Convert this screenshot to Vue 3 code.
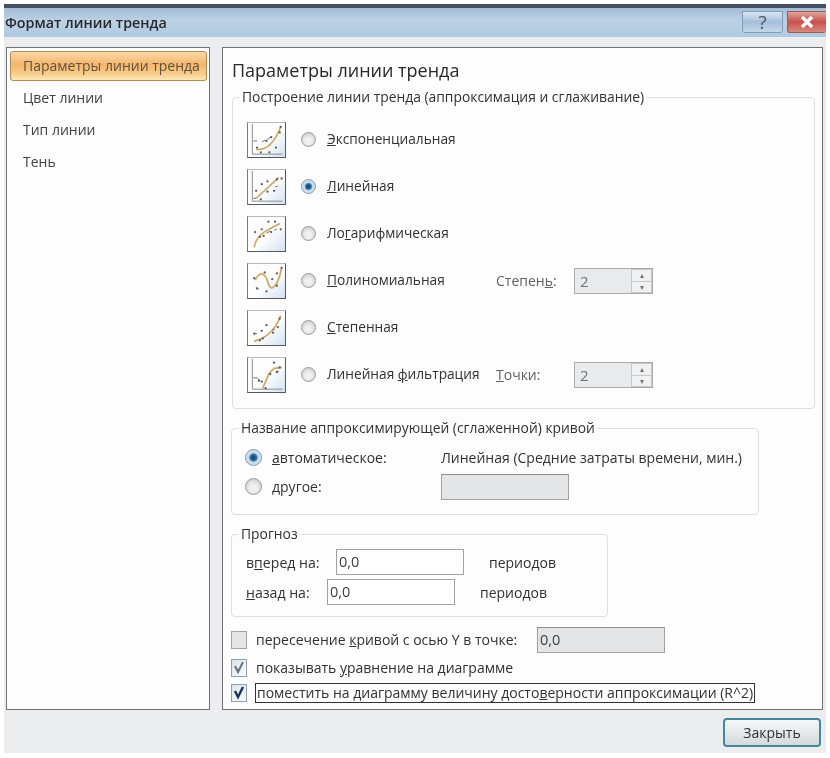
<script setup>
const nav = ['Параметры линии тренда', 'Цвет линии', 'Тип линии', 'Тень']

const trends = [
  { before: '', key: 'Э', after: 'кспоненциальная', line: 'M8 28C17 29 27 23 34 4', ticks: 'M5 19h4M14 20l4-2M20 17l4-2', dots: [[9,26],[13,31],[19,19],[24,15],[22,31],[29,26],[33,10],[34,4]], axis: true },
  { before: '', key: 'Л', after: 'инейная', checked: true, line: 'M8 30L32 8', ticks: 'M28 18l3-1M5 30h3', dots: [[8,22],[13,31],[14,15],[20,12],[20,23],[27,22],[30,10],[35,9]], axis: true },
  { before: 'Ло', key: 'г', after: 'арифмическая', line: 'M6 32C8 20 15 16 33 7', ticks: 'M19 17l4-2M27 14l3-1', dots: [[7,16],[14,13],[16,20],[21,5],[24,16],[28,5],[34,13],[12,21]] },
  { before: '', key: 'П', after: 'олиномиальная', line: 'M7 17C12 7 18 9 21 21C24 29 27 24 30 20C33 14 34 10 35 4', ticks: 'M8 24l3 3', dots: [[6,15],[9,26],[17,9],[19,29],[30,23],[30,10],[35,4],[25,16]], extra: true, spinBefore: 'Степен', spinKey: 'ь', spinAfter: ':' },
  { before: '', key: 'С', after: 'тепенная', line: 'M6 32C18 29 28 21 34 5', ticks: 'M6 24h3M25 20l3-1', dots: [[6,24],[14,21],[15,29],[19,15],[26,23],[31,17],[33,8],[12,31]] },
  { before: 'Линейная ', key: 'ф', after: 'ильтрация', line: 'M15 32L22 16L27 11L35 10', ticks: 'M5 21h4l3 3M29 14h3', dots: [[14,25],[18,32],[23,17],[27,5],[33,10],[30,15],[11,24]], axis: true, extra: true, spinBefore: '', spinKey: 'Т', spinAfter: 'очки:' }
]
</script>

<template>
  <div class="window">
    <header class="titlebar">
      <span class="title">Формат линии тренда</span>
      <div class="caption-btns">
        <span class="cap help">?</span>
        <span class="cap close">
          <svg width="14" height="12" viewBox="0 0 14 12"><path d="M2 1l10 10M12 1L2 11" stroke="#fff" stroke-width="3.4" fill="none" /></svg>
        </span>
      </div>
    </header>

    <main class="body">
      <nav class="side">
        <div v-for="(item, i) in nav" :key="item" class="nav-item" :class="{ active: i === 0 }">{{ item }}</div>
      </nav>

      <section class="pane">
        <h1 class="pane-title">Параметры линии тренда</h1>

        <fieldset class="group g1">
          <legend>Построение линии тренда (аппроксимация и сглаживание)</legend>
          <div v-for="t in trends" :key="t.after" class="trend">
            <span class="thumb">
              <svg width="37" height="34" viewBox="0 0 38 36">
                <path v-if="t.axis" d="M4 1V33H36" fill="none" stroke="#84878a" stroke-width="1" />
                <path :d="t.line" fill="none" stroke="#ddb878" stroke-width="2" />
                <path :d="t.line" fill="none" stroke="#a98f5e" stroke-width="0.5" />
                <path :d="t.ticks" fill="none" stroke="#6d7074" stroke-width="1" />
                <circle v-for="(d, n) in t.dots" :key="n" :cx="d[0]" :cy="d[1]" r="1.2" fill="#575b61" />
              </svg>
            </span>
            <span class="radio" :class="{ on: t.checked }"></span>
            <span class="trend-label">{{ t.before }}<u>{{ t.key }}</u>{{ t.after }}</span>
            <template v-if="t.extra">
              <span class="spin-label">{{ t.spinBefore }}<u>{{ t.spinKey }}</u>{{ t.spinAfter }}</span>
              <span class="spin">
                <span class="spin-val">2</span>
                <span class="spin-btns">
                  <span class="arrow">▴</span>
                  <span class="arrow">▾</span>
                </span>
              </span>
            </template>
          </div>
        </fieldset>

        <fieldset class="group g2">
          <legend>Название аппроксимирующей (сглаженной) кривой</legend>
          <div class="name-row">
            <span class="radio small on"></span>
            <span class="name-label"><u>а</u>втоматическое:</span>
            <span class="name-val">Линейная (Средние затраты времени, мин.)</span>
          </div>
          <div class="name-row">
            <span class="radio small"></span>
            <span class="name-label"><u>д</u>ругое:</span>
            <span class="field disabled"></span>
          </div>
        </fieldset>

        <fieldset class="group g3">
          <legend>Прогноз</legend>
          <div class="fc-row">
            <span class="fc-label wide">в<u>п</u>еред на:</span>
            <span class="field">0,0</span>
            <span class="fc-unit">периодов</span>
          </div>
          <div class="fc-row">
            <span class="fc-label"><u>н</u>азад на:</span>
            <span class="field">0,0</span>
            <span class="fc-unit">периодов</span>
          </div>
        </fieldset>

        <div class="check-row first">
          <span class="check off"></span>
          <span class="check-label">пересечение <u>к</u>ривой с осью Y в точке:</span>
          <span class="field disabled short">0,0</span>
        </div>
        <div class="check-row">
          <span class="check">
            <svg width="14" height="15" viewBox="0 0 14 15"><path d="M3 6l3 6 5-10" fill="none" stroke="#66717f" stroke-width="2" /></svg>
          </span>
          <span class="check-label">показывать <u>у</u>равнение на диаграмме</span>
        </div>
        <div class="check-row last">
          <span class="check">
            <svg width="14" height="15" viewBox="0 0 14 15"><path d="M3 6l3 6 5-10" fill="none" stroke="#17365d" stroke-width="2.4" /></svg>
          </span>
          <span class="check-label focus">поместить на диаграмму величину досто<u>в</u>ерности аппроксимации (R^2)</span>
        </div>
      </section>
    </main>

    <footer class="foot">
      <button class="close-btn" type="button">Закрыть</button>
    </footer>
  </div>
</template>

<style>
html, body { margin: 0; background: #fff; }
</style>

<style scoped>
.window {
  width: 830px;
  height: 758px;
  box-sizing: border-box;
  padding: 4px 4px 5px;
  display: flex;
  flex-direction: column;
  overflow: hidden;
  font-family: "Open Sans", "Noto Sans", sans-serif;
  font-size: 14px;
  color: #2f3235;
  background: #fff;
  filter: blur(0.45px);
}
.titlebar {
  height: 33px;
  flex: none;
  box-sizing: border-box;
  border-top: 4px solid #44505f;
  background: linear-gradient(#a4bdd6, #bcd1e4 45%, #b0c9e0);
  display: flex;
  align-items: center;
  justify-content: space-between;
}
.title {
  margin-left: 1px;
  font-size: 14.3px;
  font-weight: 600;
  color: #26282c;
}
.caption-btns { display: flex; align-self: flex-start; gap: 4px; margin-top: 3px; }
.cap {
  height: 22px;
  box-sizing: border-box;
  display: flex;
  align-items: center;
  justify-content: center;
  border-radius: 0 0 3px 3px;
}
.help {
  width: 41px;
  border: 1px solid #7f9db9;
  background: linear-gradient(#dbe7f2, #a5bfd8 50%, #c5d8e9);
  font-size: 19px;
  color: #4a5560;
}
.close {
  width: 39px;
  border: 1px solid #a05a55;
  border-right: 0;
  background: linear-gradient(#dca49c, #c9514a 50%, #d78a80);
}
.body {
  flex: 1;
  min-height: 0;
  display: flex;
  background: #ecedee;
  padding: 10px 3px 0 2px;
  gap: 12px;
}
.side, .pane {
  height: 663px;
  box-sizing: border-box;
  border: 1px solid #6f7174;
  background: #fdfdfd;
}
.side { width: 204px; flex: none; padding: 3px 2px 3px 3px; }
.nav-item {
  height: 32px;
  line-height: 30px;
  padding-left: 13px;
  font-size: 14px;
  color: #3f4245;
  white-space: nowrap;
}
.nav-item.active {
  height: 30px;
  line-height: 28px;
  margin-bottom: 2px;
  padding-left: 12px;
  box-sizing: border-box;
  border: 1px solid #b08a4e;
  border-radius: 3px;
  background: linear-gradient(#f9d9a8, #f5b56a 45%, #f8cf8f 80%, #fde9b8);
  color: #5f5240;
}
.pane { flex: 1; padding: 10px 7px 0 8px; }
.pane-title {
  margin: 0 0 5px 1px;
  font-size: 18px;
  line-height: 24px;
  font-weight: 400;
  color: #26282b;
}
.group {
  margin: 9px 0 0;
  padding: 0;
  min-width: 0;
  border: 1px solid #dcdee0;
  border-radius: 4px;
  box-sizing: border-box;
}
.group legend {
  margin-left: 7px;
  padding: 0 2px;
  line-height: 20px;
  font-size: 13.85px;
  color: #2f3235;
  white-space: nowrap;
}
.g1 { margin-top: 0; margin-left: 1px; width: 583px; padding: 15px 0 15px 14px; display: flex; flex-direction: column; gap: 11px; }
.g1 legend { margin-left: -7px; }
.trend { height: 36px; display: flex; align-items: center; }
.thumb {
  width: 39px;
  height: 36px;
  flex: none;
  box-sizing: border-box;
  border: 1px solid;
  border-color: #b7babd #55585c #55585c #77797c;
  background: linear-gradient(135deg, #fdfdfd 55%, #d2e2f2);
  display: flex;
  align-items: center;
  justify-content: center;
}
.radio {
  width: 15px;
  height: 15px;
  flex: none;
  box-sizing: border-box;
  margin-left: 15px;
  margin-bottom: 2px;
  border-radius: 50%;
  border: 1px solid #9a9c9f;
  background: radial-gradient(circle at 50% 60%, #f0f0f0 30%, #c9c9c9 85%);
}
.radio.on {
  border-color: #7d99b4;
  background: radial-gradient(circle, #0e3f6e 0, #2c6da5 30%, #c9d9e8 45%, #dfe8f0 100%);
}
.radio.small { margin: 0 0 0 13px; width: 17px; height: 17px; }
.trend-label { margin-left: 11px; margin-bottom: 3px; width: 169px; flex: none; white-space: nowrap; font-size: 13.7px; }
.spin-label { width: 78px; flex: none; margin-bottom: 2px; color: #606366; }
.spin {
  width: 79px;
  height: 26px;
  box-sizing: border-box;
  border: 1px solid #a9abad;
  background: #e9eaeb;
  display: flex;
  align-items: center;
  justify-content: space-between;
  font-size: 15px;
  color: #6f7275;
}
.spin-val { margin-left: 5px; }
.spin-btns {
  width: 21px;
  height: 24px;
  box-sizing: border-box;
  border: 1px solid #c6c8ca;
  display: flex;
  flex-direction: column;
  background: #f0f1f2;
}
.arrow {
  flex: 1;
  font-size: 8px;
  line-height: 10px;
  text-align: center;
  color: #77797c;
  border-bottom: 1px solid #c6c8ca;
}
.arrow:last-child { border-bottom: 0; }
.g2 { width: 528px; padding: 5px 0 13px 0; }
.name-row { display: flex; align-items: center; height: 29px; }
.name-label { margin-left: 10px; width: 169px; flex: none; font-size: 14px; }
.name-val { white-space: nowrap; }
.field {
  width: 128px;
  height: 26px;
  flex: none;
  box-sizing: border-box;
  border: 1px solid #9fa1a3;
  background: #fff;
  padding-left: 2px;
  font-size: 14.5px;
  line-height: 24px;
  color: #3a3d40;
}
.field.disabled { background: #e3e5e7; border-top-color: #8b8d90; }
.g3 { width: 377px; padding: 5px 0 11px 0; display: flex; flex-direction: column; gap: 4px; }
.fc-row { display: flex; align-items: center; height: 26px; padding-left: 14px; }
.fc-label { width: 81px; flex: none; font-size: 14.1px; white-space: nowrap; }
.fc-label.wide { width: 90px; }
.fc-unit { margin-left: 25px; }
.check-row { display: flex; align-items: center; height: 25px; }
.check-row.first { margin-top: 10px; margin-bottom: 3px; }
.check {
  width: 16px;
  height: 18px;
  flex: none;
  box-sizing: border-box;
  border: 1px solid #8aa0b5;
  background: linear-gradient(135deg, #dfe3e8, #fafbfc);
  display: flex;
  align-items: center;
  justify-content: center;
}
.check.off { border-color: #a0a2a4; background: #e4e5e6; }
.check-label { margin-left: 9px; white-space: nowrap; }
.check-row.first .check-label { width: 272px; flex: none; }
.check-row.first .field { margin-left: 9px; }
.focus {
  border: 1px solid #333;
  margin-left: 8px;
  padding: 0 1px;
  line-height: 18px;
  width: 500px;
  box-sizing: border-box;
}
.foot {
  height: 42px;
  flex: none;
  background: #ecedee;
  display: flex;
  justify-content: flex-end;
  align-items: flex-start;
  padding: 7px 5px 0 0;
  box-sizing: border-box;
}
.close-btn {
  width: 98px;
  height: 29px;
  border: 2px solid #46889b;
  border-radius: 4px;
  background: linear-gradient(#f4f6f7, #e6e8ea 50%, #d4dadf);
  font-family: inherit;
  font-size: 14px;
  color: #2f3235;
  padding: 0;
}
u { text-underline-offset: 1px; }
</style>
